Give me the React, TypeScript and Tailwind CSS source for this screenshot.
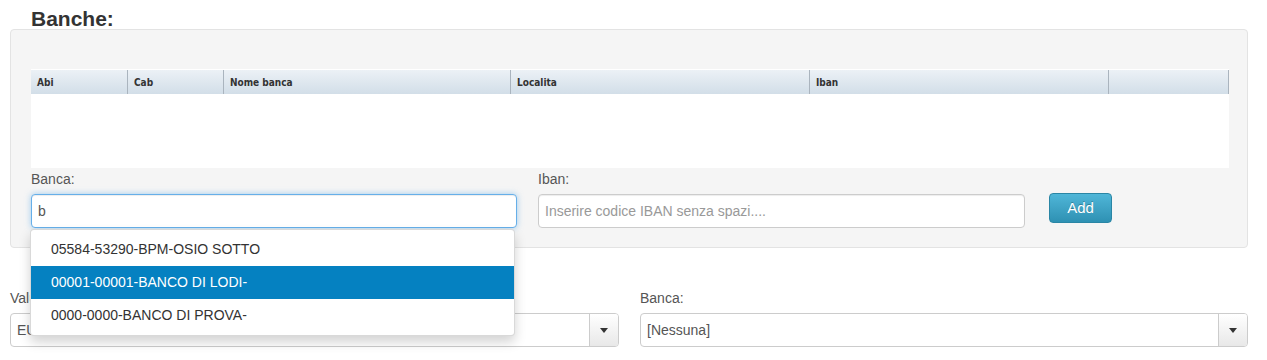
import React from "react"

const cols = ["Abi", "Cab", "Nome banca", "Localita", "Iban", ""]

const suggestions = [
  "05584-53290-BPM-OSIO SOTTO",
  "00001-00001-BANCO DI LODI-",
  "0000-0000-BANCO DI PROVA-",
]

function SelectBox({ value }: { value: string }) {
  return (
    <div className="flex h-[34px] rounded-[4px] border border-[#ccc] bg-white overflow-hidden">
      <div className="flex-1 pl-[6px] flex items-center text-[14px] text-[#555] whitespace-nowrap overflow-hidden">
        {value}
      </div>
      <div className="w-[29px] border-l border-[#ccc] bg-gradient-to-b from-white to-[#e8e8e8] flex items-center justify-center">
        <span className="block w-0 h-0 border-l-[4px] border-r-[4px] border-t-[5px] border-l-transparent border-r-transparent border-t-[#333]" />
      </div>
    </div>
  )
}

export default function App() {
  return (
    <div
      className="w-[1267px] h-[360px] bg-white pl-[10px] pr-[19px] text-[#333] overflow-hidden"
      style={{ fontFamily: '"Liberation Sans", Arial, sans-serif' }}
    >
      {/* Titolo */}
      <h2 className="ml-[21px] pt-[8px] text-[21px] leading-[21px] font-bold text-[#333]">Banche:</h2>

      {/* Pannello banche */}
      <div className="bg-[#f5f5f5] border border-[#e3e3e3] rounded-[4px] pt-[39px] pl-[20px] pr-[18px] pb-[19px]">
        <div className="bg-white">
          <div
            className="grid grid-cols-[96px_96px_287px_299px_299px_1fr] h-[25px] bg-gradient-to-b from-[#ecf1f6] to-[#d2dee8] border-t border-white"
            style={{ fontFamily: '"DejaVu Sans Condensed", "DejaVu Sans", Tahoma, sans-serif' }}
          >
            {cols.map((c, i) => (
              <div
                key={i}
                className={
                  "flex items-center pl-[6px] text-[10px] font-bold text-[#333] " +
                  (i > 0 ? "border-l border-[#aab4be] " : "") +
                  (i === cols.length - 1 ? "border-r border-[#aab4be]" : "")
                }
              >
                {c}
              </div>
            ))}
          </div>
          <div className="h-[74px]" />
        </div>

        {/* Riga inserimento */}
        <div className="flex mt-[1px]">
          <div className="w-[486px] flex flex-col relative">
            <label className="text-[14px] leading-[20px] text-[#555] mb-[5px]">Banca:</label>
            <div className="h-[34px] rounded-[4px] border border-[#66afe9] bg-white pl-[6px] flex items-center text-[14px] text-[#555] shadow-[inset_0_1px_1px_rgba(0,0,0,0.075),0_0_6px_rgba(102,175,233,0.6)]">
              b
            </div>

            {/* Suggerimenti */}
            <div className="absolute left-[-1px] top-[60px] w-[485px] z-10 bg-white border border-[rgba(0,0,0,0.15)] rounded-[4px] shadow-[0_6px_12px_rgba(0,0,0,0.175)] py-[3px]">
              {suggestions.map((s, i) => (
                <div
                  key={s}
                  className={
                    "h-[33px] flex items-center pl-[20px] text-[14px] " +
                    (i === 1 ? "bg-[#0581c1] text-white" : "text-[#333]")
                  }
                >
                  {s}
                </div>
              ))}
            </div>
          </div>

          <div className="w-[487px] ml-[21px] flex flex-col">
            <label className="text-[14px] leading-[20px] text-[#555] mb-[5px]">Iban:</label>
            <div className="h-[34px] rounded-[4px] border border-[#ccc] bg-white pl-[6px] flex items-center text-[14px] text-[#999] shadow-[inset_0_1px_1px_rgba(0,0,0,0.075)]">
              Inserire codice IBAN senza spazi....
            </div>
          </div>

          <div className="ml-[24px] pt-[24px]">
            <button className="w-[63px] h-[30px] rounded-[4px] border border-[#2a86a5] bg-gradient-to-b from-[#4fb6d8] to-[#2e91b3] text-white text-[15px] [text-shadow:0_-1px_0_rgba(0,0,0,0.25)]">
              Add
            </button>
          </div>
        </div>
      </div>

      {/* Riga valuta / banca */}
      <div className="flex mt-[40px]">
        <div className="w-[609px] flex flex-col">
          <label className="text-[14px] leading-[20px] text-[#555] mb-[5px]">Valuta:</label>
          <SelectBox value="EURO" />
        </div>
        <div className="flex-1 ml-[21px] flex flex-col">
          <label className="text-[14px] leading-[20px] text-[#555] mb-[5px]">Banca:</label>
          <SelectBox value="[Nessuna]" />
        </div>
      </div>
    </div>
  )
}
